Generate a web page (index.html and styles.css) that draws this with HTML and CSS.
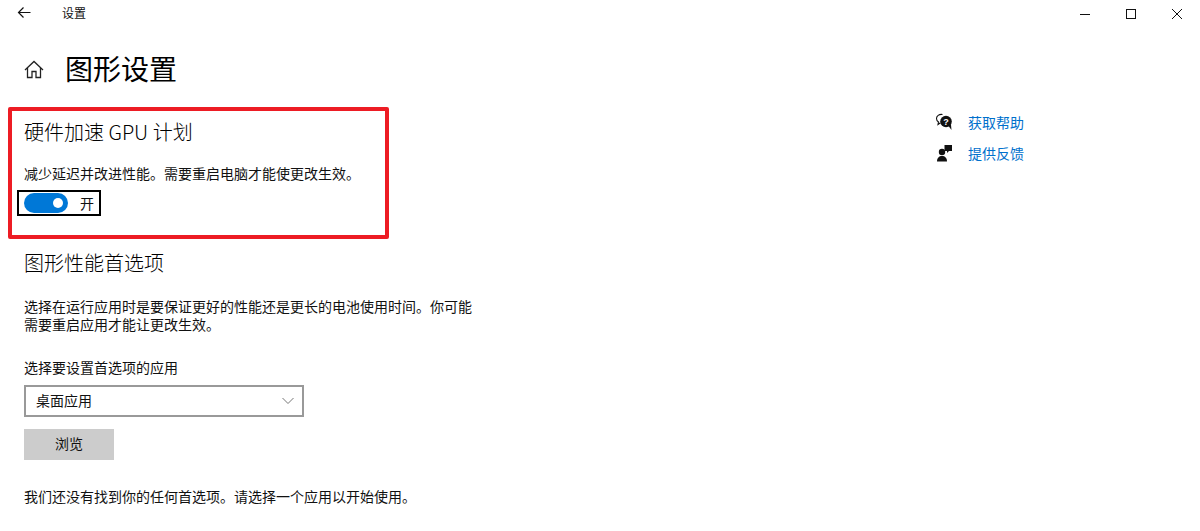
FILE: index.html
```html
<!DOCTYPE html>
<html lang="zh-CN">
<head>
  <meta charset="UTF-8" />
  <title>设置</title>
  <link rel="stylesheet" href="styles.css">
</head>
<body>
  <div class="window">
    <div class="titlebar">
      <svg class="back" width="16" height="16" viewBox="0 0 16 16"><path d="M13.500 6.500H1.500M6.500 1.500L1.500 6.500 6.500 11.500" fill="none" stroke="#111" stroke-width="1.200"/></svg>
      <span class="title">设置</span>
      <div class="controls">
        <svg width="12" height="12" viewBox="0 0 12 12"><path d="M1 6.500h10" stroke="#111" stroke-width="1"/></svg>
        <svg width="12" height="12" viewBox="0 0 12 12"><rect x="1.500" y="1.500" width="9" height="9" fill="none" stroke="#111"/></svg>
        <svg width="12" height="12" viewBox="0 0 12 12"><path d="M1 1l10 10M11 1L1 11" stroke="#111" stroke-width="1"/></svg>
      </div>
    </div>

    <div class="page-head">
      <svg class="home" width="20" height="20" viewBox="0 0 20 20"><path d="M1 11l9-8.500 9 8.500M3.500 9v9.500H8v-6h4v6h4.500V9" fill="none" stroke="#222" stroke-width="1.300"/></svg>
      <h1>图形设置</h1>
    </div>

    <div class="content">
      <div class="main">
        <section class="gpu">
          <h2>硬件加速 GPU 计划</h2>
          <p class="gpu-desc">减少延迟并改进性能。需要重启电脑才能使更改生效。</p>
          <div class="toggle-row">
            <span class="toggle"><span class="knob"></span></span>
            <span>开</span>
          </div>
        </section>

        <section class="prefs">
          <h2>图形性能首选项</h2>
          <p class="prefs-desc">选择在运行应用时是要保证更好的性能还是更长的电池使用时间。你可能需要重启应用才能让更改生效。</p>
          <label class="select-label">选择要设置首选项的应用</label>
          <div class="select">
            <span>桌面应用</span>
            <svg width="12" height="8" viewBox="0 0 12 8"><path d="M.5 1L6 6.500 11.500 1" fill="none" stroke="#777" stroke-width="1"/></svg>
          </div>
          <div class="browse">浏览</div>
          <p class="empty">我们还没有找到你的任何首选项。请选择一个应用以开始使用。</p>
        </section>
      </div>

      <aside class="side">
        <a class="side-link">
          <svg width="18" height="18" viewBox="0 0 18 18">
            <path d="M7.500 1.500C4 1 1.500 3 1.500 5.500c0 1.500.8 2.700 2 3.400L3 11.500l2.500-1.700" fill="none" stroke="#111" stroke-width="1.100"/>
            <circle cx="11" cy="8.500" r="5.800" fill="#111"/>
            <path d="M13.500 13l3 4-.6-6z" fill="#111"/>
            <text x="11" y="11.600" class="q">?</text>
          </svg>
          <span>获取帮助</span>
        </a>
        <a class="side-link">
          <svg width="18" height="18" viewBox="0 0 18 18">
            <circle cx="7" cy="8" r="3.200" fill="#111"/>
            <path d="M2 17.500c0-3.800 2-5.600 5-5.600s5 1.800 5 5.600z" fill="#111"/>
            <path d="M9.500 1h7.500v6h-3l-2 2V7H9.500z" fill="#111"/>
          </svg>
          <span>提供反馈</span>
        </a>
      </aside>
    </div>

    <div class="annot-box"></div>
    <div class="focus-box"></div>
  </div>
</body>
</html>
```

FILE: styles.css
```css
* {
  margin: 0;
  padding: 0;
  box-sizing: border-box;
}

html, body {
  width: 100%;
  height: 100%;
  overflow: hidden;
  background-color: #fff;
  color: #111;
  font-family: "Noto Sans CJK SC", "Liberation Sans", sans-serif;
}

.window {
  position: relative;
  height: 531px;
  overflow: hidden;
}

.titlebar {
  display: flex;
  align-items: center;
  height: 28px;
  padding-left: 17px;
}

.back {
  margin-right: 29px;
}

.title {
  font-size: 12px;
  line-height: 26px;
  height: 28px;
}

.controls {
  display: flex;
  gap: 34px;
  margin-left: auto;
  padding-right: 17px;
}

.page-head {
  display: flex;
  align-items: center;
  height: 50px;
  margin-top: 16px;
  padding-left: 24px;
}

.home {
  margin-right: 21px;
}

h1 {
  font-size: 28px;
  font-weight: 400;
  line-height: 48px;
  height: 50px;
  color: #000;
}

.content {
  display: flex;
  padding-left: 24px;
}

.main {
  width: 450px;
}

h2 {
  font-size: 20px;
  font-weight: 300;
  line-height: 26px;
  color: #000;
}

p, label {
  display: block;
  font-size: 14px;
  line-height: 18px;
}

.gpu {
  height: 156px;
  padding-top: 25px;
}

.gpu-desc {
  margin-top: 19px;
}

.toggle-row {
  display: flex;
  align-items: center;
  gap: 12px;
  margin-top: 11px;
  font-size: 14px;
}

.toggle {
  display: flex;
  justify-content: flex-end;
  align-items: center;
  width: 44px;
  height: 20px;
  padding-right: 5px;
  border-radius: 10px;
  background-color: #0078d7;
}

.knob {
  width: 10px;
  height: 10px;
  border-radius: 50%;
  background-color: #fff;
}

.prefs-desc {
  margin-top: 21px;
}

.select-label {
  margin-top: 25px;
}

.select {
  display: flex;
  justify-content: space-between;
  align-items: center;
  width: 280px;
  height: 32px;
  margin-top: 9px;
  padding: 0 8px 2px 10px;
  border: 2px solid #999;
  font-size: 14px;
}

.select svg {
  margin-top: 2px;
}

.browse {
  width: 90px;
  height: 31px;
  margin-top: 12px;
  background-color: #ccc;
  font-size: 14px;
  line-height: 29px;
  text-align: center;
}

.empty {
  margin-top: 27px;
}

.side {
  display: flex;
  flex-direction: column;
  gap: 10px;
  margin-left: 461px;
  padding-top: 17px;
}

.side-link {
  display: flex;
  align-items: center;
  gap: 15px;
  height: 21px;
  font-size: 14px;
  color: #0070cc;
}

.q {
  fill: #fff;
  font-size: 9px;
  font-weight: 700;
  text-anchor: middle;
  font-family: "Liberation Sans", sans-serif;
}

/* annotation drawn on top of the screenshot */
.annot-box {
  position: absolute;
  left: 8px;
  top: 107px;
  width: 381px;
  height: 132px;
  border: 4px solid #ed1c24;
  border-radius: 2px;
}

.focus-box {
  position: absolute;
  left: 17px;
  top: 190px;
  width: 84px;
  height: 26px;
  border: 2px solid #000;
}
```
